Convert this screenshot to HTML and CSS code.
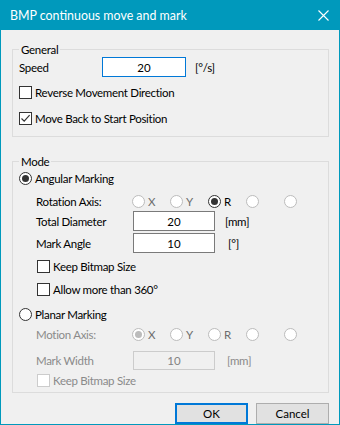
FILE: index.html
```html
<!DOCTYPE html>
<html lang="en">
<head>
  <meta charset="UTF-8">
  <title>BMP continuous move and mark</title>
  <link rel="stylesheet" href="styles.css">
</head>
<body>
  <div class="window">
    <div class="titlebar">
      <span class="title">BMP continuous move and mark</span>
      <svg class="close" width="11" height="11" viewBox="0 0 11 11">
        <path d="M0.5 0.5 L10.5 10.5 M10.5 0.5 L0.5 10.5" stroke="#fff" stroke-width="1.1" fill="none"/>
      </svg>
    </div>

    <div class="content">
      <!-- General -->
      <fieldset class="group group-general">
        <legend>General</legend>
        <div class="row speed-row">
          <span class="speed-label">Speed</span>
          <input class="field field-speed" type="text" value="20">
          <span class="unit unit-speed">[°/s]</span>
        </div>
        <div class="check-row reverse-row">
          <span class="box"></span>
          <span>Reverse Movement Direction</span>
        </div>
        <div class="check-row back-row">
          <span class="box">
            <svg width="11" height="11" viewBox="0 0 11 11"><path d="M1.5 5.5 L4.2 8.2 L9.6 2.2" stroke="#333" stroke-width="1.2" fill="none"/></svg>
          </span>
          <span>Move Back to Start Position</span>
        </div>
      </fieldset>

      <!-- Mode -->
      <fieldset class="group group-mode">
        <legend>Mode</legend>
        <div class="check-row angular-row">
          <span class="radio on"></span>
          <span>Angular Marking</span>
        </div>
        <div class="row axis-row rotation-row">
          <span class="axis-label">Rotation Axis:</span>
          <div class="axis-options">
            <div class="opt off"><span class="radio"></span><span>X</span></div>
            <div class="opt off"><span class="radio"></span><span>Y</span></div>
            <div class="opt"><span class="radio on"></span><span>R</span></div>
            <div class="opt off"><span class="radio"></span></div>
            <div class="opt off"><span class="radio"></span></div>
          </div>
        </div>
        <div class="row value-row diameter-row">
          <span class="value-label">Total Diameter</span>
          <input class="field" type="text" value="20">
          <span class="unit unit-mm">[mm]</span>
        </div>
        <div class="row value-row angle-row">
          <span class="value-label">Mark Angle</span>
          <input class="field" type="text" value="10">
          <span class="unit unit-deg">[°]</span>
        </div>
        <div class="check-row sub keep-row">
          <span class="box"></span>
          <span>Keep Bitmap Size</span>
        </div>
        <div class="check-row sub allow-row">
          <span class="box"></span>
          <span>Allow more than 360°</span>
        </div>
        <div class="check-row planar-row">
          <span class="radio"></span>
          <span>Planar Marking</span>
        </div>
        <div class="row axis-row motion-row disabled">
          <span class="axis-label">Motion Axis:</span>
          <div class="axis-options">
            <div class="opt off"><span class="radio on"></span><span>X</span></div>
            <div class="opt off"><span class="radio"></span><span>Y</span></div>
            <div class="opt off"><span class="radio"></span><span>R</span></div>
            <div class="opt off"><span class="radio"></span></div>
            <div class="opt off"><span class="radio"></span></div>
          </div>
        </div>
        <div class="row value-row width-row disabled">
          <span class="value-label">Mark Width</span>
          <input class="field" type="text" value="10" disabled>
          <span class="unit unit-width">[mm]</span>
        </div>
        <div class="check-row sub keep2-row disabled">
          <span class="box"></span>
          <span>Keep Bitmap Size</span>
        </div>
      </fieldset>

      <div class="buttons">
        <button class="btn btn-default">OK</button>
        <button class="btn">Cancel</button>
      </div>
    </div>
  </div>
</body>
</html>
```

FILE: styles.css
```css
/* base */
body {
  margin: 0;
  background-color: #f0f0f0;
  font-family: Lato, "Noto Sans", sans-serif;
  font-size: 11.5px;
  color: #000;
}

.window {
  width: 340px;
  height: 425px;
  box-sizing: border-box;
  border: 1px solid #0099bc;
  background-color: #f0f0f0;
}

/* title bar */
.titlebar {
  height: 29px;
  background-color: #0099bc;
  display: flex;
  align-items: center;
  justify-content: space-between;
  padding: 0 9px 0 9px;
  color: #fff;
}

.title {
  font-size: 12.4px;
}

.close {
  display: block;
  margin-right: 1px;
}

.content {
  padding: 12px 10px 0 11px;
  letter-spacing: -0.3px;
}

/* group boxes */
.group {
  border: 1px solid #dcdcdc;
  margin: 0;
  padding: 0 0 0 6px;
  min-width: 0;
}

.group legend {
  padding: 0 2px;
  line-height: 15px;
}

.group-general {
  padding-bottom: 10px;
}

.group-mode {
  margin-top: 17px;
  padding-bottom: 4px;
}

.row {
  display: flex;
  align-items: center;
}

.check-row {
  display: flex;
  align-items: center;
  height: 15px;
  line-height: 15px;
}

.check-row.sub {
  padding-left: 18px;
}

/* check boxes and radios */
.box {
  width: 13px;
  height: 13px;
  box-sizing: border-box;
  border: 1px solid #333;
  background-color: #fff;
  margin-right: 3px;
  display: flex;
  align-items: center;
  justify-content: center;
}

.radio {
  width: 13px;
  height: 13px;
  box-sizing: border-box;
  border: 1px solid #333;
  border-radius: 50%;
  background-color: #fff;
  margin-right: 3px;
  display: flex;
  align-items: center;
  justify-content: center;
  flex-shrink: 0;
}

.radio.on::after {
  content: "";
  width: 7px;
  height: 7px;
  border-radius: 50%;
  background-color: #333;
}

/* text fields */
.field {
  box-sizing: border-box;
  height: 20px;
  border: 1px solid #7a7a7a;
  background-color: #fff;
  font-family: inherit;
  font-size: 11.5px;
  text-align: center;
  padding: 0;
  margin: 0;
  color: #000;
}

.field-speed {
  width: 84px;
  border-color: #0078d7;
}

.speed-row {
  height: 20px;
}

.speed-label {
  width: 83px;
}

.unit-speed {
  margin-left: 9px;
}

.reverse-row {
  margin-top: 8px;
}

.back-row {
  margin-top: 11px;
}

/* mode rows */
.angular-row {
  margin-top: 2px;
}

.axis-row {
  height: 15px;
  padding-left: 17px;
}

.rotation-row {
  margin-top: 8px;
}

.axis-label {
  width: 96px;
}

.axis-options {
  display: flex;
}

.opt {
  width: 38px;
  display: flex;
  align-items: center;
}

.opt.off .radio {
  border-color: #bcbcbc;
}

.opt.off span + span {
  color: #6d6d6d;
}

.value-row {
  height: 20px;
  padding-left: 17px;
}

.value-label {
  width: 97px;
}

.value-row .field {
  width: 82px;
}

.diameter-row {
  margin-top: 2px;
}

.angle-row {
  margin-top: 2px;
}

.unit-mm {
  margin-left: 10px;
}

.unit-deg {
  margin-left: 13px;
}

.keep-row {
  margin-top: 6px;
}

.allow-row {
  margin-top: 8px;
}

.planar-row {
  margin-top: 10px;
}

.motion-row {
  margin-top: 5px;
}

.width-row {
  margin-top: 9px;
  height: 19px;
}

.width-row .field {
  height: 19px;
  background-color: #f0f0f0;
  border-color: #cccccc;
  color: #838383;
}

.unit-width {
  margin-left: 12px;
}

.keep2-row {
  margin-top: 3px;
}

/* disabled look */
.disabled {
  color: #8a8a8a;
}

.disabled .box {
  border-color: #cccccc;
}

.disabled .radio.on::after {
  background-color: #bcbcbc;
}

/* buttons */
.buttons {
  display: flex;
  justify-content: flex-end;
  gap: 8px;
  margin-top: 10px;
}

.btn {
  width: 73px;
  height: 21px;
  box-sizing: border-box;
  background-color: #e1e1e1;
  border: 1px solid #adadad;
  font-family: inherit;
  font-size: 11.5px;
  color: #000;
  padding: 0;
}

.btn-default {
  border: 2px solid #0078d7;
}
```
